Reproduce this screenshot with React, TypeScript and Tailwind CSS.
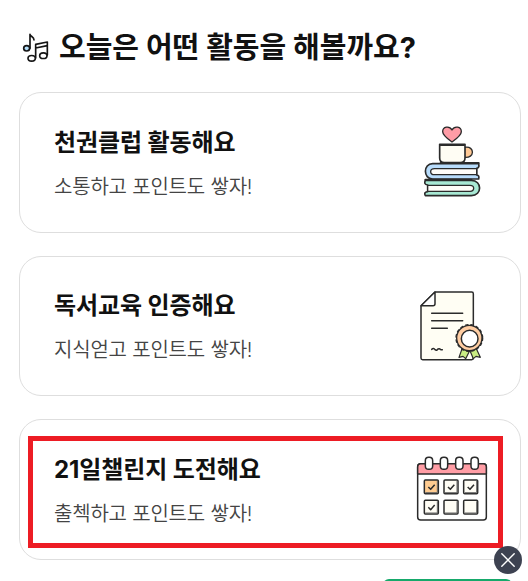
import type { ReactNode } from "react";

function MusicIcon() {
  return (
    <svg viewBox="66 36 84 96" className="h-8 w-7 shrink-0" fill="none" stroke="#151515" strokeWidth="5" strokeLinecap="round" strokeLinejoin="round">
      <path d="M90 85V43c1 7 12 7 12 17" />
      <ellipse cx="80" cy="85" rx="9" ry="8" fill="#b5dffb" />
      <path d="M107 114V73l35-7v39M107 84l35-7" />
      <ellipse cx="95" cy="115" rx="11" ry="8.5" fill="#fff" />
      <ellipse cx="130" cy="107" rx="11" ry="8.5" fill="#fff" />
    </svg>
  );
}

function BooksIcon() {
  return (
    <svg viewBox="0 7 270 270" className="size-[90px] shrink-0" fill="none" stroke="#2b2b2b" strokeWidth="5" strokeLinecap="round" strokeLinejoin="round">
      <path d="M126 82C108 69 98 60 98 51c0-15 20-19 28-5 8-14 28-10 28 5 0 9-10 18-28 31z" fill="#ff9ca6" strokeWidth="4" />
      <path d="M165 98c30-5 30 34-2 30" fill="#ffc995" strokeWidth="4" />
      <path d="M89 89h76v41q0 14-14 14h-48q-14 0-14-14z" fill="#fffdf4" />
      <path d="M92 91h70" strokeWidth="6" />
      <path d="M206 147H68c-29 0-29 46 0 46h138q3-11-6-12v-20q9-2 6-14z" fill="#b8dcfb" />
      <path d="M200 162H74q-12 0-12 9t12 9h126z" fill="#fffdf9" strokeWidth="4" />
      <path d="M46 197h138c33 0 33 46 0 46H46q-6-10 7-12v-20q-13-2-7-14z" fill="#a8e9d4" />
      <path d="M53 212h127q11 0 11 9t-11 9H53z" fill="#fffdf9" strokeWidth="4" />
      <path d="M92 145h114M46 195h138" strokeWidth="6" />
    </svg>
  );
}

function CertificateIcon() {
  return (
    <svg viewBox="0 3 270 270" className="size-[90px] shrink-0" fill="none" stroke="#2b2b2b" strokeWidth="4.5" strokeLinecap="round" strokeLinejoin="round">
      <path d="M75 36h110q5 0 5 5v193q0 5-5 5H38q-5 0-5-5V78z" fill="#fffef4" />
      <path d="M75 36v35q0 6-6 6H33z" fill="#fff" />
      <path d="M65 100h93M65 122h93M65 145h47M65 208q6-5 10 1 5 4 9-2 5-2 8 2h5" />
      <path d="m157 204-10 28 12-3 8 7 12-24M198 204l13 28-13-3-8 7-10-24" fill="#c9ed83" strokeWidth="3.5" />
      <circle cx="178" cy="174" r="38" fill="#ffcda2" strokeWidth="4" />
      <circle cx="178" cy="174" r="40" strokeWidth="4" strokeDasharray="7 9" />
      <circle cx="179" cy="176" r="25" fill="#fff" />
    </svg>
  );
}

const days = [
  { x: 58, y: 106, fill: "#ffcc91", done: true },
  { x: 117, y: 106, fill: "#fffdf5", done: true },
  { x: 176, y: 106, fill: "#fffdf5", done: true },
  { x: 58, y: 167, fill: "#fffdf5", done: true },
  { x: 117, y: 167, fill: "#fffdf5", done: false },
  { x: 176, y: 167, fill: "#fffdf5", done: false },
];

function CalendarIcon() {
  return (
    <svg viewBox="15 -2 270 270" className="size-[90px] shrink-0" fill="none" stroke="#2b2b2b" strokeWidth="4.5" strokeLinecap="round" strokeLinejoin="round">
      <rect x="38" y="57" width="206" height="169" rx="9" fill="#fff" />
      <path d="M38 88V66q0-9 9-9h188q9 0 9 9v22z" fill="#ff9da5" />
      {[72, 117, 163, 209].map((x) => (
        <rect key={x} x={x - 11} y="38" width="22" height="36" rx="10" fill="#fff" />
      ))}
      {days.map((day) => (
        <g key={`${day.x}-${day.y}`}>
          <rect x={day.x} y={day.y} width="42" height="41" rx="3" fill={day.fill} />
          <path d={`M${day.x + 39} ${day.y + 4}v34h-35`} stroke="#666" strokeWidth="3" />
          {day.done && <path d={`m${day.x + 12} ${day.y + 21} 7 7 12-14`} strokeLinecap="butt" />}
        </g>
      ))}
    </svg>
  );
}

const activities: { title: string; description: string; icon: ReactNode }[] = [
  {
    title: "천권클럽 활동해요",
    description: "소통하고 포인트도 쌓자!",
    icon: <BooksIcon />,
  },
  {
    title: "독서교육 인증해요",
    description: "지식얻고 포인트도 쌓자!",
    icon: <CertificateIcon />,
  },
  {
    title: "21일챌린지 도전해요",
    description: "출첵하고 포인트도 쌓자!",
    icon: <CalendarIcon />,
  },
];

export default function App() {
  return (
    <main className="relative h-[581px] w-[528px] overflow-hidden bg-white font-['Inter','Noto_Sans_CJK_KR',sans-serif] text-[#111]">
      <header className="flex h-[92px] items-center gap-[9px] pl-[22px] pt-[4px]">
        <MusicIcon />
        <h1 className="whitespace-nowrap text-[29px] font-bold leading-10">오늘은 어떤 활동을 해볼까요?</h1>
      </header>

      <section className="flex flex-col gap-[23px] pl-[19px]">
        {activities.map((activity) => (
          <article
            key={activity.title}
            className="flex h-[140.5px] w-[502px] items-center justify-between rounded-[22px] border border-[#dedede] pl-[34px] pr-[20px]"
          >
            <div className="whitespace-nowrap pt-[3px]">
              <h2 className="text-2xl font-bold leading-9 tracking-[-0.1px]">{activity.title}</h2>
              <p className="mt-[10px] text-[20px] font-[350] leading-8 tracking-[-0.2px] text-[#444]">{activity.description}</p>
            </div>
            {activity.icon}
          </article>
        ))}
      </section>

      <div className="absolute left-[28px] top-[436px] h-[112px] w-[475px] border-[5px] border-[#ed1c24]" />
      <div className="absolute left-[383px] top-[579px] h-10 w-[129px] rounded-[6px] bg-[#16a96b]" />
      <button aria-label="닫기" className="absolute left-[494px] top-[546px] flex size-7 items-center justify-center rounded-full bg-[#3d4251]">
        <svg viewBox="0 0 14 14" className="size-3.5" stroke="#fff" strokeWidth="1.4" strokeLinecap="round">
          <path d="m.8.8 12.4 12.4M13.2.8.8 13.2" />
        </svg>
      </button>
    </main>
  );
}
